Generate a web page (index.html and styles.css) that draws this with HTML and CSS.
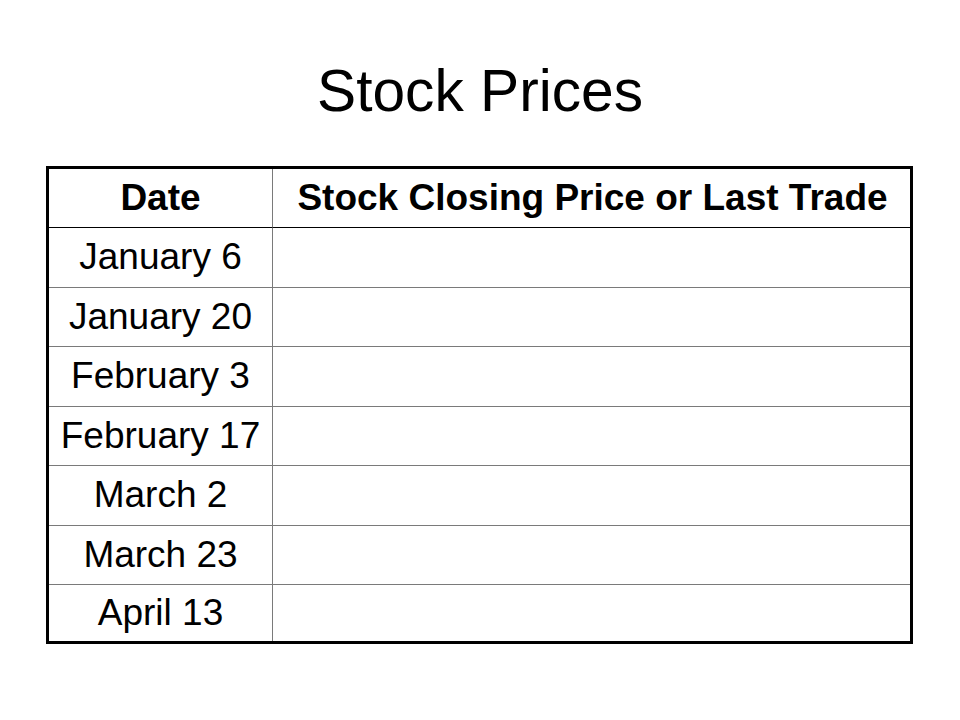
FILE: index.html
```html
<!DOCTYPE html>
<html>
<head>
<meta charset="utf-8">
<title>Stock Prices</title>
<link rel="stylesheet" href="styles.css">
</head>
<body>
<div class="slide">
  <h1 class="title">Stock Prices</h1>
  <div class="table">
    <div class="cell head col1">Date</div>
    <div class="cell head col2">Stock Closing Price or Last Trade</div>
    <div class="cell col1">January 6</div><div class="cell col2"></div>
    <div class="cell col1">January 20</div><div class="cell col2"></div>
    <div class="cell col1">February 3</div><div class="cell col2"></div>
    <div class="cell col1">February 17</div><div class="cell col2"></div>
    <div class="cell col1">March 2</div><div class="cell col2"></div>
    <div class="cell col1">March 23</div><div class="cell col2"></div>
    <div class="cell col1 last">April 13</div><div class="cell col2 last"></div>
  </div>
</div>
</body>
</html>
```

FILE: styles.css
```css
html, body {
  margin: 0;
  padding: 0;
  background: #ffffff;
}
.slide {
  width: 960px;
  height: 720px;
  font-family: "Liberation Sans", Arial, sans-serif;
  color: #000;
  padding-top: 62px;
  box-sizing: border-box;
}
.title {
  margin: 0;
  font-size: 58.67px;
  font-weight: normal;
  line-height: 58px;
  height: 58px;
  text-align: center;
}
.table {
  margin: 46px 0 0 46px;
  width: 867px;
  height: 478px;
  box-sizing: border-box;
  border: 3px solid #000;
  display: grid;
  grid-template-columns: 224px 1fr;
  grid-template-rows: 59px repeat(6, 59.5px) 1fr;
}
.cell {
  box-sizing: border-box;
  display: flex;
  align-items: center;
  justify-content: center;
  font-size: 37px;
  border-bottom: 1px solid #7a7a7a;
  white-space: nowrap;
}
.col1 {
  border-right: 1px solid #7a7a7a;
}
.head {
  font-weight: bold;
  border-bottom-color: #000;
}
.head.col2 {
  padding-left: 2px;
}
.last {
  border-bottom: none;
}
```
